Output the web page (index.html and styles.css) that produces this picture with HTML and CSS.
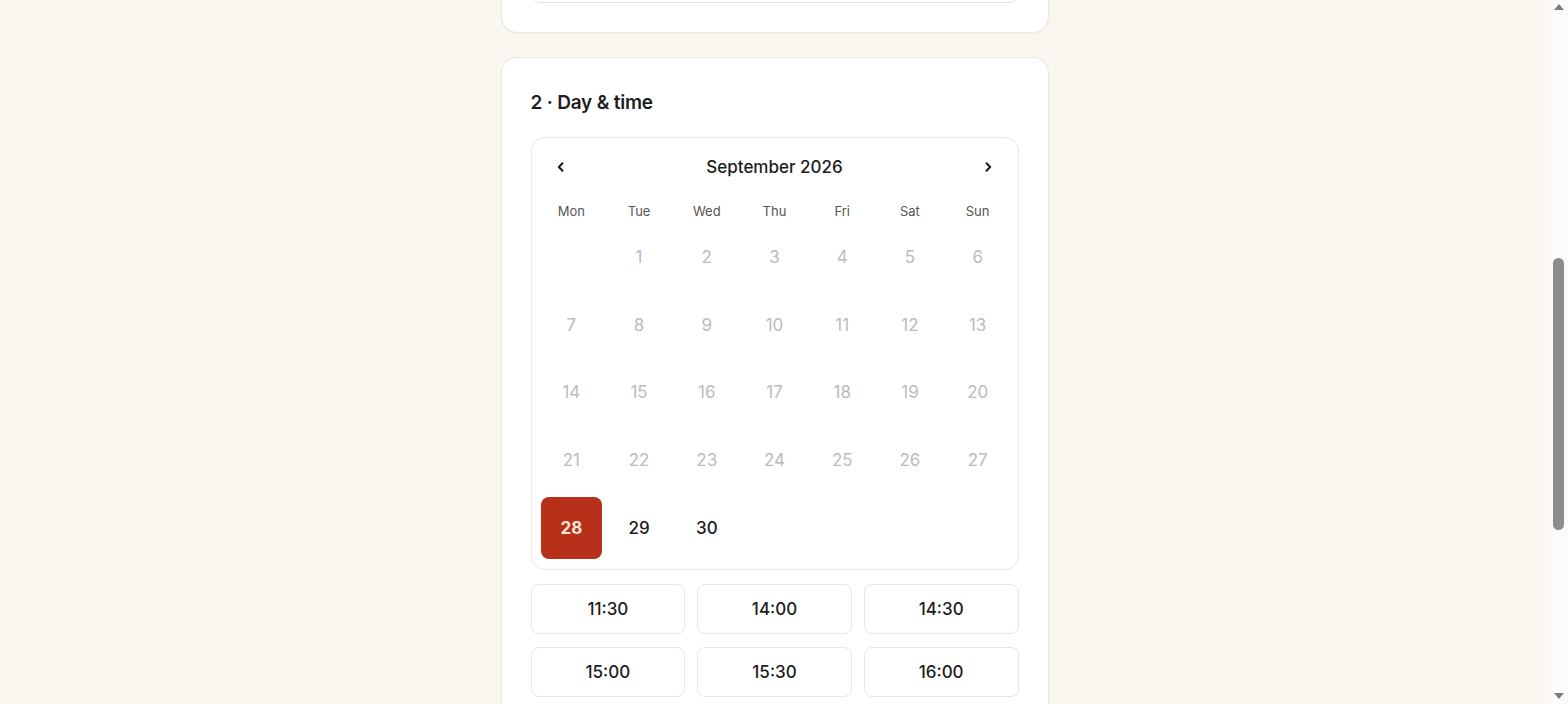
FILE: index.html
```html
<!DOCTYPE html>
<html lang="en">

<head>
  <meta charset="UTF-8">
  <meta name="viewport" content="width=device-width, initial-scale=1.0">
  <title>Book a visit</title>
  <link rel="stylesheet" href="styles.css">
</head>

<body>
  <div class="page">
    <section class="card card-prev">
      <div class="field"></div>
    </section>

    <section class="card">
      <h2 class="step-title">2 · Day &amp; time</h2>

      <div class="calendar">
        <div class="cal-head">
          <button class="nav-btn" aria-label="Previous month">
            <svg width="12" height="12" viewBox="0 0 12 12"><path d="M7.5 2.2L3.8 6l3.7 3.8" fill="none" stroke="#1d1d1d" stroke-width="2" stroke-linecap="round" stroke-linejoin="round"/></svg>
          </button>
          <div class="month">September 2026</div>
          <button class="nav-btn" aria-label="Next month">
            <svg width="12" height="12" viewBox="0 0 12 12"><path d="M4.5 2.2L8.2 6l-3.7 3.8" fill="none" stroke="#1d1d1d" stroke-width="2" stroke-linecap="round" stroke-linejoin="round"/></svg>
          </button>
        </div>

        <div class="weekdays">
          <span>Mon</span><span>Tue</span><span>Wed</span><span>Thu</span><span>Fri</span><span>Sat</span><span>Sun</span>
        </div>

        <div class="days">
          <span class="day empty"></span>
          <span class="day off">1</span>
          <span class="day off">2</span>
          <span class="day off">3</span>
          <span class="day off">4</span>
          <span class="day off">5</span>
          <span class="day off">6</span>
          <span class="day off">7</span>
          <span class="day off">8</span>
          <span class="day off">9</span>
          <span class="day off">10</span>
          <span class="day off">11</span>
          <span class="day off">12</span>
          <span class="day off">13</span>
          <span class="day off">14</span>
          <span class="day off">15</span>
          <span class="day off">16</span>
          <span class="day off">17</span>
          <span class="day off">18</span>
          <span class="day off">19</span>
          <span class="day off">20</span>
          <span class="day off">21</span>
          <span class="day off">22</span>
          <span class="day off">23</span>
          <span class="day off">24</span>
          <span class="day off">25</span>
          <span class="day off">26</span>
          <span class="day off">27</span>
          <button class="day selected">28</button>
          <button class="day">29</button>
          <button class="day">30</button>
        </div>
      </div>

      <div class="slots">
        <button class="slot">11:30</button>
        <button class="slot">14:00</button>
        <button class="slot">14:30</button>
        <button class="slot">15:00</button>
        <button class="slot">15:30</button>
        <button class="slot">16:00</button>
      </div>
    </section>
  </div>

  <div class="scrollbar" aria-hidden="true">
    <span class="sb-arrow up"></span>
    <span class="sb-thumb"></span>
    <span class="sb-arrow down"></span>
  </div>
</body>

</html>
```

FILE: styles.css
```css
body {
  margin: 0;
  padding-right: 19px;
  font-family: Inter, "Noto Sans", Arial, sans-serif;
  background-color: #faf7f0;
  color: #1d1d1d;
}

.page {
  width: 548px;
  margin: 0 auto;
  padding-bottom: 40px;
}

.card {
  box-sizing: border-box;
  background-color: #fff;
  border: 1px solid #ede9e1;
  border-radius: 16px;
  padding: 29px;
  margin-bottom: 24px;
  box-shadow: 0 1px 2px rgba(60, 40, 20, 0.05);
}

.card-prev {
  margin-top: -77px;
}

.field {
  height: 48px;
  border: 1px solid #e6e3dd;
  border-radius: 10px;
}

.step-title {
  margin: 4px 0 22px;
  font-size: 19px;
  font-weight: 600;
  letter-spacing: -0.2px;
  line-height: 24px;
}

.calendar {
  border: 1px solid #ece9e3;
  border-radius: 14px;
  padding: 9px 9px 10px;
}

.cal-head {
  display: flex;
  align-items: center;
  justify-content: space-between;
  height: 40px;
  padding: 0 12px;
}

.nav-btn {
  display: flex;
  align-items: center;
  justify-content: center;
  width: 16px;
  height: 24px;
  padding: 0;
  border: none;
  background: none;
  cursor: pointer;
}

.month {
  font-size: 17px;
  font-weight: 500;
}

.weekdays {
  display: grid;
  grid-template-columns: repeat(7, 1fr);
  gap: 6px;
  margin-top: 14px;
  font-size: 13px;
  color: #555;
  text-align: center;
  line-height: 20px;
}

.days {
  display: grid;
  grid-template-columns: repeat(7, 1fr);
  gap: 6px;
  margin-top: 5px;
}

.day {
  display: flex;
  align-items: center;
  justify-content: center;
  aspect-ratio: 1;
  padding: 0;
  border: none;
  border-radius: 8px;
  background: none;
  font-family: inherit;
  font-size: 17px;
  font-weight: 500;
  color: #1d1d1d;
}

.day.off {
  font-weight: 400;
  color: #bbbbbb;
}

.day.selected {
  background-color: #b6301a;
  color: #fde7d6;
  font-weight: 700;
}

.slots {
  display: grid;
  grid-template-columns: repeat(3, 1fr);
  column-gap: 12px;
  row-gap: 13px;
  margin-top: 14px;
}

.slot {
  height: 50px;
  background-color: #fff;
  border: 1px solid #e8e6e1;
  border-radius: 8px;
  font-family: inherit;
  font-size: 17px;
  font-weight: 500;
  color: #1d1d1d;
  cursor: pointer;
}

/* page scrollbar as it shows in the capture */
.scrollbar {
  position: fixed;
  top: 0;
  right: 0;
  bottom: 0;
  width: 17px;
  background-color: #fbfbfb;
}

.sb-arrow {
  position: absolute;
  left: 3px;
  width: 0;
  height: 0;
  border-left: 5px solid transparent;
  border-right: 5px solid transparent;
}

.sb-arrow.up {
  top: 4px;
  border-bottom: 6px solid #7d7d7d;
}

.sb-arrow.down {
  bottom: 5px;
  border-top: 6px solid #7d7d7d;
}

.sb-thumb {
  position: absolute;
  top: 258px;
  left: 2px;
  width: 11px;
  height: 272px;
  border-radius: 6px;
  background-color: #8c8c8c;
}
```
